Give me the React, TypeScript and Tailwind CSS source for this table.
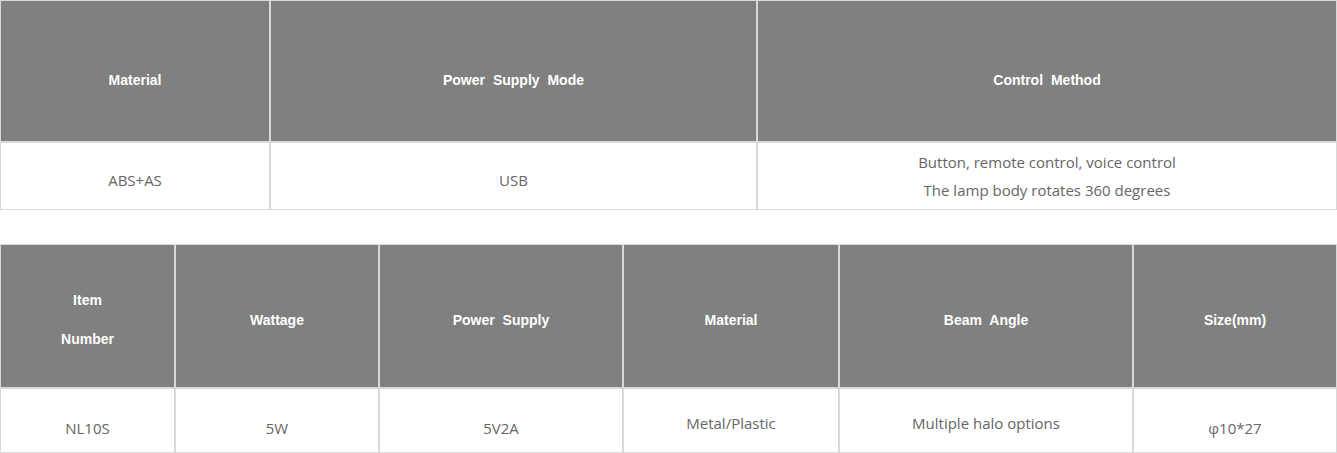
import React from "react";

const th = "bg-[#808080] text-white font-bold text-[14px] text-center align-middle border border-[#d9d9d9] [word-spacing:4px] [font-family:'Liberation_Sans',Arial,sans-serif]";
const td = "bg-white text-[#666] text-[15px] text-center align-middle border border-[#d9d9d9] [font-family:'Open_Sans',sans-serif]";

export default function App() {
  return (
    <div className="w-[1337px] bg-white">
      <table className="w-[1337px] table-fixed border-separate border-spacing-0">
        <colgroup>
          <col className="w-[270px]" />
          <col className="w-[487px]" />
          <col className="w-[580px]" />
        </colgroup>
        <tbody>
          <tr>
            <td className={`${th} h-[142px] pt-[18px]`}>Material</td>
            <td className={`${th} h-[142px] pt-[18px]`}>Power Supply Mode</td>
            <td className={`${th} h-[142px] pt-[18px]`}>Control Method</td>
          </tr>
          <tr>
            <td className={`${td} h-[68px] pt-[8px]`}>ABS+AS</td>
            <td className={`${td} h-[68px] pt-[8px]`}>USB</td>
            <td className={`${td} h-[68px] leading-[28px]`}>
              <p>Button, remote control, voice control</p>
              <p>The lamp body rotates 360 degrees</p>
            </td>
          </tr>
        </tbody>
      </table>
      <table className="mt-[34px] w-[1337px] table-fixed border-separate border-spacing-0">
        <colgroup>
          <col className="w-[175px]" />
          <col className="w-[204px]" />
          <col className="w-[244px]" />
          <col className="w-[216px]" />
          <col className="w-[294px]" />
          <col className="w-[204px]" />
        </colgroup>
        <tbody>
          <tr>
            <td className={`${th} h-[144px] pt-[8px] leading-[39px]`}>
              <p>Item</p>
              <p>Number</p>
            </td>
            <td className={`${th} h-[144px] pt-[8px]`}>Wattage</td>
            <td className={`${th} h-[144px] pt-[8px]`}>Power Supply</td>
            <td className={`${th} h-[144px] pt-[8px]`}>Material</td>
            <td className={`${th} h-[144px] pt-[8px]`}>Beam Angle</td>
            <td className={`${th} h-[144px] pt-[8px]`}>Size(mm)</td>
          </tr>
          <tr>
            <td className={`${td} h-[65px] pt-[15px]`}>NL10S</td>
            <td className={`${td} h-[65px] pt-[15px]`}>5W</td>
            <td className={`${td} h-[65px] pt-[15px]`}>5V2A</td>
            <td className={`${td} h-[65px] pt-[5px]`}>Metal/Plastic</td>
            <td className={`${td} h-[65px] pt-[5px]`}>Multiple halo options</td>
            <td className={`${td} h-[65px] pt-[15px]`}>φ10*27</td>
          </tr>
        </tbody>
      </table>
    </div>
  );
}
